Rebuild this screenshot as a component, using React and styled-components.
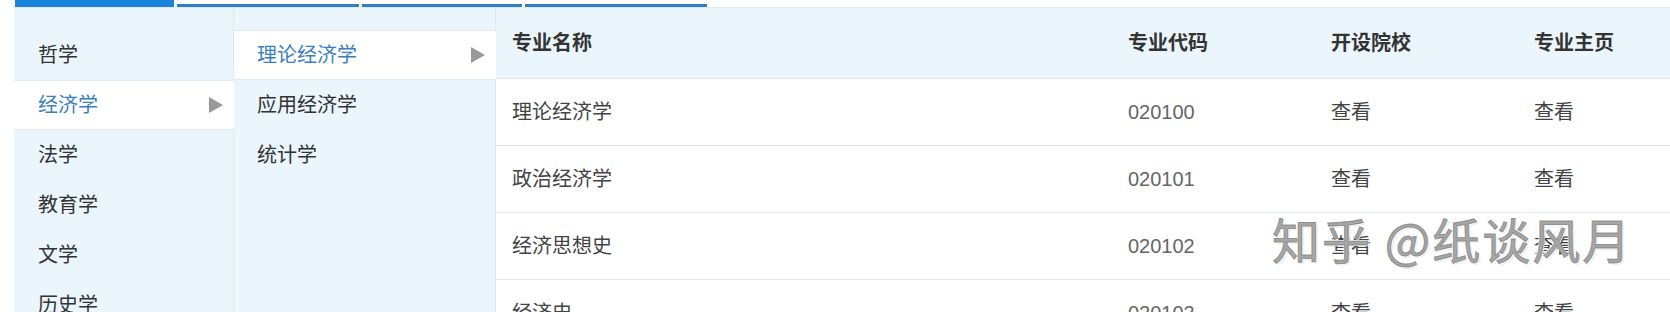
import React from "react";
import styled, { createGlobalStyle } from "styled-components";

const Global = createGlobalStyle`
  html, body { margin: 0; padding: 0; background: #fff; }
  body {
    width: 1670px;
    height: 312px;
    overflow: hidden;
    font-family: "Liberation Sans", "Noto Sans CJK SC", sans-serif;
  }
`;

const Page = styled.div`
  position: relative;
  width: 1670px;
`;

const TabBar = styled.div`
  display: flex;
  align-items: flex-end;
  height: 7px;
  padding-left: 15px;
  gap: 3px;
`;

const Tab = styled.div`
  width: ${(p) => p.$w}px;
  height: ${(p) => (p.$active ? 7 : 3)}px;
  background: ${(p) => (p.$active ? "#1a84dc" : "#2e7fc2")};
`;

const Panel = styled.div`
  display: flex;
  margin-left: 14px;
  border-top: 1px solid #e2e8ec;
  height: 304px;
`;

const Column = styled.div`
  width: ${(p) => p.$w}px;
  flex: none;
  background: #eaf5fc;
  border-right: 1px solid #dde9f1;
  padding-top: 22px;
  box-sizing: border-box;
`;

const MenuItem = styled.div`
  display: flex;
  align-items: center;
  justify-content: space-between;
  height: 50px;
  box-sizing: border-box;
  padding: 0 11px 0 ${(p) => p.$pl}px;
  font-size: 20px;
  line-height: 1;
  color: ${(p) => (p.$active ? "#3b7fc0" : "#333")};
  background: ${(p) => (p.$active ? "#fff" : "transparent")};
  border-top: 1px solid ${(p) => (p.$active ? "#e0e9ef" : "transparent")};
  border-bottom: 1px solid ${(p) => (p.$active ? "#e0e9ef" : "transparent")};
  margin-right: ${(p) => (p.$active ? "-1px" : "0")};
`;

const Arrow = styled.span`
  width: 0;
  height: 0;
  border-top: 8px solid transparent;
  border-bottom: 8px solid transparent;
  border-left: 14px solid #999;
`;

const Table = styled.div`
  flex: 1;
  display: flex;
  flex-direction: column;
  background: #fff;
`;

const Row = styled.div`
  display: grid;
  grid-template-columns: 616px 203px 203px 1fr;
  align-items: center;
  height: ${(p) => (p.$head ? 71 : 67)}px;
  box-sizing: border-box;
  background: ${(p) => (p.$head ? "#eaf5fc" : "#fff")};
  border-bottom: 1px solid #e2e6e9;
  flex: none;
`;

const Cell = styled.div`
  padding-left: 16px;
  font-size: 20px;
  line-height: 1;
  font-weight: ${(p) => (p.$head ? 700 : 400)};
  color: ${(p) => (p.$head ? "#333" : p.$num ? "#666" : "#444")};
`;

const Watermark = styled.div`
  position: absolute;
  left: 1272px;
  top: 207px;
  font-size: 48px;
  line-height: 1.3;
  font-weight: 400;
  letter-spacing: 2px;
  color: rgba(150, 150, 150, 0.85);
  -webkit-text-stroke: 1px rgba(130, 130, 130, 0.8);
  text-shadow: 1px 1px 0 #fff, -1px -1px 0 #fff, 2px 2px 1px rgba(0, 0, 0, 0.08);
  font-family: "Noto Sans CJK SC", sans-serif;
  pointer-events: none;
`;

const left = ["哲学", "经济学", "法学", "教育学", "文学", "历史学"];
const sub = ["理论经济学", "应用经济学", "统计学"];
const rows = [
  ["理论经济学", "020100"],
  ["政治经济学", "020101"],
  ["经济思想史", "020102"],
  ["经济史", "020103"],
];

export default function App() {
  return (
    <Page>
      <Global />
      <TabBar>
        <Tab $active $w={159} />
        <Tab $w={182} />
        <Tab $w={160} />
        <Tab $w={182} />
      </TabBar>
      <Panel>
        <Column $w={220}>
          {left.map((t, i) => (
            <MenuItem key={t} $pl={24} $active={i === 1}>
              {t}
              {i === 1 && <Arrow />}
            </MenuItem>
          ))}
        </Column>
        <Column $w={262}>
          {sub.map((t, i) => (
            <MenuItem key={t} $pl={23} $active={i === 0}>
              {t}
              {i === 0 && <Arrow />}
            </MenuItem>
          ))}
        </Column>
        <Table>
          <Row $head>
            <Cell $head>专业名称</Cell>
            <Cell $head>专业代码</Cell>
            <Cell $head>开设院校</Cell>
            <Cell $head>专业主页</Cell>
          </Row>
          {rows.map(([name, code]) => (
            <Row key={code}>
              <Cell>{name}</Cell>
              <Cell $num>{code}</Cell>
              <Cell>查看</Cell>
              <Cell>查看</Cell>
            </Row>
          ))}
        </Table>
      </Panel>
      <Watermark>知乎 @纸谈风月</Watermark>
    </Page>
  );
}
